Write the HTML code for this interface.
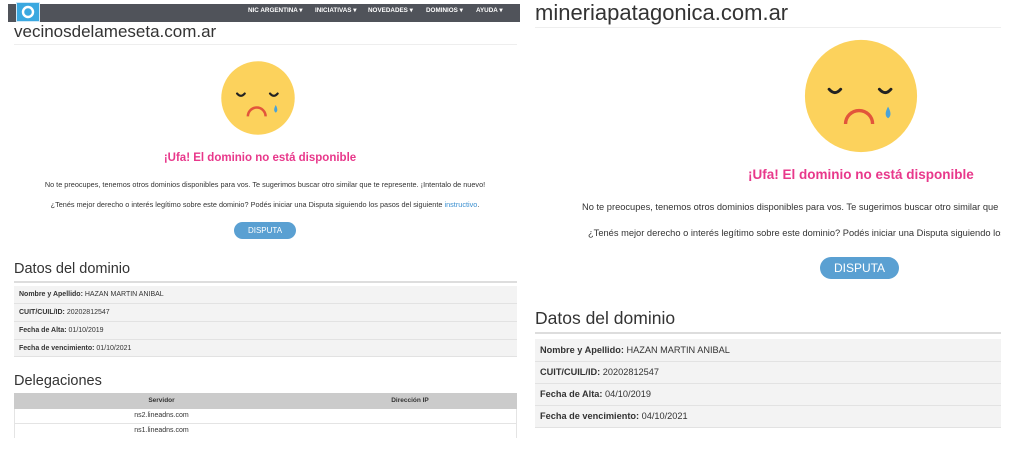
<!DOCTYPE html>
<html><head><meta charset="utf-8"><style>
*{margin:0;padding:0;box-sizing:border-box}
body{width:1024px;height:465px;background:#fff;position:relative;overflow:hidden;font-family:"Liberation Sans",sans-serif;color:#333}
.a{position:absolute;white-space:nowrap}
.n{position:absolute;white-space:nowrap;top:7px;font-size:6.3px;font-weight:bold;color:#fff}
.row{position:absolute;background:#f3f3f3;border-bottom:1px solid #e2e2e2}
b{font-weight:bold}
</style></head><body>
<!-- LEFT PANEL -->
<div class="a" style="left:8px;top:4px;width:512px;height:18px;background:#50535a"></div>
<div class="a" style="left:16px;top:2px;width:24px;height:20px;background:#3aa8e0;border:1px solid #cfe8f7"></div>
<svg class="a" style="left:20px;top:5px" width="16" height="14" viewBox="0 0 16 14"><circle cx="8" cy="7" r="5" fill="none" stroke="#fff" stroke-width="2.4"/><rect x="6" y="5" width="4" height="4" fill="#3aa8e0"/></svg>
<div class="n" style="left:248px">NIC ARGENTINA ▾</div>
<div class="n" style="left:315px">INICIATIVAS ▾</div>
<div class="n" style="left:368px">NOVEDADES ▾</div>
<div class="n" style="left:426px">DOMINIOS ▾</div>
<div class="n" style="left:476px">AYUDA ▾</div>
<div class="a" style="left:14px;top:22px;font-size:17px;color:#333">vecinosdelameseta.com.ar</div>
<div class="a" style="left:14px;top:44px;width:503px;height:1px;background:#eee"></div>
<svg class="a" style="left:220px;top:60px" width="76" height="76" viewBox="0 0 120 120"><circle cx="60" cy="60" r="58" fill="#fcd25c"/><path d="M27 53 q6 7 12 0 M79 53 q6 7 12 0" fill="none" stroke="#222" stroke-width="3.5" stroke-linecap="round"/><path d="M44 89 a13 13 0 0 1 28 0" fill="none" stroke="#e2553b" stroke-width="4"/><path d="M88 71 q-5 9 0 12 q5 -3 0 -12z" fill="#4aa3d8"/></svg>
<div class="a" style="left:0;width:520px;text-align:center;top:152px;font-size:11.5px;font-weight:bold;color:#e8388b">¡Ufa! El dominio no está disponible</div>
<div class="a" style="left:0;width:530px;text-align:center;top:180px;font-size:7.3px;color:#333">No te preocupes, tenemos otros dominios disponibles para vos. Te sugerimos buscar otro similar que te represente. ¡Intentalo de nuevo!</div>
<div class="a" style="left:0;width:530px;text-align:center;top:200px;font-size:7.3px;color:#333">¿Tenés mejor derecho o interés legítimo sobre este dominio? Podés iniciar una Disputa siguiendo los pasos del siguiente <span style="color:#3a8fd0">instructivo</span>.</div>
<div class="a" style="left:234px;top:222px;width:62px;height:17px;border-radius:9px;background:#5aa0d2;color:#fff;font-size:8px;text-align:center;line-height:17px">DISPUTA</div>
<div class="a" style="left:14px;top:261px;font-size:14.5px;color:#333">Datos del dominio</div>
<div class="a" style="left:14px;top:281px;width:503px;height:2px;background:#ddd"></div>
<div class="row" style="left:14px;top:286px;width:503px;height:18px"></div>
<div class="row" style="left:14px;top:304px;width:503px;height:18px"></div>
<div class="row" style="left:14px;top:322px;width:503px;height:18px"></div>
<div class="row" style="left:14px;top:340px;width:503px;height:17px"></div>
<div class="a" style="left:19px;top:291px;font-size:7px"><b>Nombre y Apellido:</b> HAZAN MARTIN ANIBAL</div>
<div class="a" style="left:19px;top:309px;font-size:7px"><b>CUIT/CUIL/ID:</b> 20202812547</div>
<div class="a" style="left:19px;top:327px;font-size:7px"><b>Fecha de Alta:</b> 01/10/2019</div>
<div class="a" style="left:19px;top:345px;font-size:7px"><b>Fecha de vencimiento:</b> 01/10/2021</div>
<div class="a" style="left:14px;top:373px;font-size:14.5px;color:#333">Delegaciones</div>
<div class="a" style="left:14px;top:393px;width:503px;height:16px;background:#cbcbcb"></div>
<div class="a" style="left:14px;top:397px;width:295px;text-align:center;font-size:6.5px;font-weight:bold">Servidor</div>
<div class="a" style="left:310px;top:397px;width:200px;text-align:center;font-size:6.5px;font-weight:bold">Dirección IP</div>
<div class="a" style="left:14px;top:409px;width:503px;height:15px;border:1px solid #e4e4e4;border-top:none"></div>
<div class="a" style="left:14px;top:424px;width:503px;height:14px;border-left:1px solid #e4e4e4;border-right:1px solid #e4e4e4"></div>
<div class="a" style="left:14px;top:412px;width:295px;text-align:center;font-size:7px">ns2.lineadns.com</div>
<div class="a" style="left:14px;top:427px;width:295px;text-align:center;font-size:7px">ns1.lineadns.com</div>
<!-- RIGHT PANEL -->
<div class="a" style="left:535px;top:0;width:466px;height:465px;overflow:hidden">
<div class="a" style="left:0;top:0px;font-size:22px;color:#333">mineriapatagonica.com.ar</div>
<div class="a" style="left:0;top:27px;width:466px;height:1px;background:#eee"></div>
<svg class="a" style="left:268px;top:38px" width="116" height="116" viewBox="0 0 120 120"><circle cx="60" cy="60" r="58" fill="#fcd25c"/><path d="M27 53 q6 7 12 0 M79 53 q6 7 12 0" fill="none" stroke="#222" stroke-width="3" stroke-linecap="round"/><path d="M44 89 a13 13 0 0 1 28 0" fill="none" stroke="#e2553b" stroke-width="3.5"/><path d="M88 71 q-5 9 0 12 q5 -3 0 -12z" fill="#4aa3d8"/></svg>
<div class="a" style="left:213px;top:167px;font-size:13.5px;font-weight:bold;color:#e8388b">¡Ufa! El dominio no está disponible</div>
<div class="a" style="left:47px;top:202px;font-size:9.3px">No te preocupes, tenemos otros dominios disponibles para vos. Te sugerimos buscar otro similar que te represente. ¡Intentalo de nuevo!</div>
<div class="a" style="left:53px;top:228px;font-size:9.3px">¿Tenés mejor derecho o interés legítimo sobre este dominio? Podés iniciar una Disputa siguiendo los pasos del siguiente instructivo.</div>
<div class="a" style="left:285px;top:257px;width:79px;height:22px;border-radius:11px;background:#5aa0d2;color:#fff;font-size:12px;text-align:center;line-height:22px">DISPUTA</div>
<div class="a" style="left:0;top:308px;font-size:17.5px;color:#333">Datos del dominio</div>
<div class="a" style="left:0;top:332px;width:466px;height:2px;background:#ddd"></div>
<div class="row" style="left:0;top:339px;width:466px;height:23px"></div>
<div class="row" style="left:0;top:362px;width:466px;height:22px"></div>
<div class="row" style="left:0;top:384px;width:466px;height:22px"></div>
<div class="row" style="left:0;top:406px;width:466px;height:22px"></div>
<div class="a" style="left:5px;top:345px;font-size:9.2px"><b>Nombre y Apellido:</b> HAZAN MARTIN ANIBAL</div>
<div class="a" style="left:5px;top:367px;font-size:9.2px"><b>CUIT/CUIL/ID:</b> 20202812547</div>
<div class="a" style="left:5px;top:389px;font-size:9.2px"><b>Fecha de Alta:</b> 04/10/2019</div>
<div class="a" style="left:5px;top:411px;font-size:9.2px"><b>Fecha de vencimiento:</b> 04/10/2021</div>
</div>
</body></html>
